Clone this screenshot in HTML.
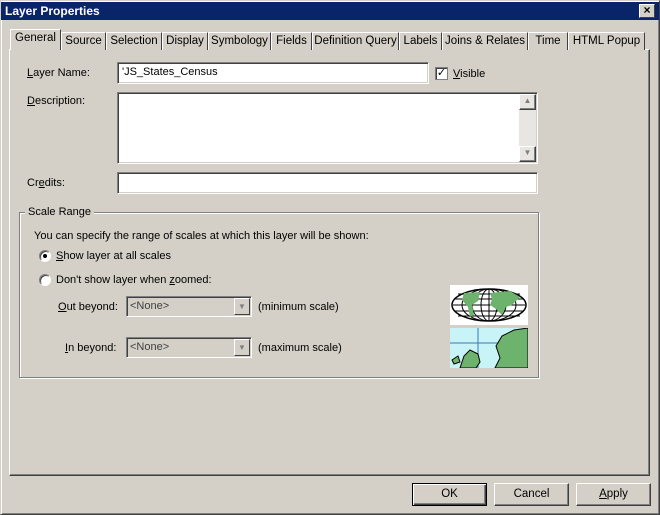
<!DOCTYPE html>
<html><head><style>
*{box-sizing:border-box;margin:0;padding:0}
body{width:660px;height:515px;background:#d4d0c8;font-family:"Liberation Sans",Arial,sans-serif;font-size:11px;color:#000;position:relative;overflow:hidden}
.a{position:absolute}
.win{left:0;top:0;width:660px;height:515px;border:1px solid;border-color:#d4d0c8 #404040 #404040 #d4d0c8;box-shadow:inset 1px 1px 0 #fff,inset -1px -1px 0 #808080}
.title{left:1px;top:2px;width:658px;height:18px;background:#0a246a;color:#fff;font-weight:bold;font-size:12px;line-height:18px;padding-left:4px}
.close{right:5px;top:4px;width:16px;height:14px;background:#d4d0c8;border:1px solid;border-color:#fff #404040 #404040 #fff;color:#000;font-size:12px;line-height:11px;text-align:center;font-weight:bold}
.tab{top:32px;height:18px;border:1px solid;border-color:#fff #404040 transparent #fff;border-bottom:none;text-align:center;line-height:16px;background:#d4d0c8;font-size:11.5px}
.tab.sel{top:29px;height:21px;z-index:2}
.panel{left:9px;top:49px;width:641px;height:427px;border:1px solid;border-color:#fff #404040 #404040 #fff;box-shadow:inset -1px -1px 0 #808080}
.edit{background:#fff;border:1px solid;border-color:#808080 #fff #fff #808080;box-shadow:inset 1px 1px 0 #404040,inset -1px -1px 0 #d4d0c8}
.btn{height:23px;border:1px solid;border-color:#fff #404040 #404040 #fff;box-shadow:inset -1px -1px 0 #808080;text-align:center;line-height:21px;font-size:11.5px}
.grp{left:19px;top:212px;width:520px;height:166px;border:1px solid #808080;box-shadow:1px 1px 0 #fff,inset 1px 1px 0 #fff}
.combo{height:21px;width:126px;background:#d4d0c8;border:1px solid;border-color:#808080 #fff #fff #808080;box-shadow:inset 1px 1px 0 #404040;color:#404040;padding-left:3px;line-height:18px}
.dd{right:1px;top:1px;width:16px;height:17px;border:1px solid;border-color:#fff #404040 #404040 #fff;background:#d4d0c8;color:#808080;font-size:8px;line-height:15px;text-align:center}
.radio{width:12px;height:12px;border-radius:50%;background:#fff;border:1px solid;border-color:#808080 #fff #fff #808080;box-shadow:inset 1px 1px 0 #404040}
</style></head><body>
<div class="a win"></div>
<div class="a title">Layer Properties</div>
<div class="a close">×</div>

<div class="a panel"></div>
<div class="a tab sel" style="left:10px;width:51px">General</div>
<div class="a tab" style="left:61px;width:45px">Source</div>
<div class="a tab" style="left:106px;width:56px">Selection</div>
<div class="a tab" style="left:162px;width:46px">Display</div>
<div class="a tab" style="left:208px;width:63px">Symbology</div>
<div class="a tab" style="left:271px;width:41px">Fields</div>
<div class="a tab" style="left:312px;width:87px">Definition Query</div>
<div class="a tab" style="left:399px;width:43px">Labels</div>
<div class="a tab" style="left:442px;width:86px">Joins &amp; Relates</div>
<div class="a tab" style="left:528px;width:40px">Time</div>
<div class="a tab" style="left:568px;width:77px">HTML Popup</div>

<div class="a" style="left:27px;top:67px"><u>L</u>ayer Name:</div>
<div class="a edit" style="left:117px;top:62px;width:312px;height:22px;padding:3px 4px">'JS_States_Census</div>
<div class="a" style="left:435px;top:67px;width:13px;height:13px;background:#fff;border:1px solid #808080;box-shadow:inset 1px 1px 0 #404040;font-size:11px;line-height:11px;text-align:center">✓</div>
<div class="a" style="left:453px;top:68px"><u>V</u>isible</div>

<div class="a" style="left:27px;top:95px"><u>D</u>escription:</div>
<div class="a edit" style="left:117px;top:92px;width:421px;height:72px"></div>
<div class="a" style="left:519px;top:94px;width:17px;height:68px;background:#e8e6e2"></div>
<div class="a btn" style="left:519px;top:94px;width:17px;height:16px;line-height:12px;font-size:8px;color:#808080">▲</div>
<div class="a btn" style="left:519px;top:146px;width:17px;height:16px;line-height:12px;font-size:8px;color:#808080">▼</div>

<div class="a" style="left:27px;top:177px">Cr<u>e</u>dits:</div>
<div class="a edit" style="left:117px;top:172px;width:421px;height:22px"></div>

<div class="a grp"></div>
<div class="a" style="left:25px;top:206px;background:#d4d0c8;padding:0 3px">Scale Range</div>
<div class="a" style="left:34px;top:230px">You can specify the range of scales at which this layer will be shown:</div>
<div class="a radio" style="left:39px;top:250px"><div class="a" style="left:3px;top:3px;width:4px;height:4px;background:#000;border-radius:50%"></div></div>
<div class="a" style="left:56px;top:250px"><u>S</u>how layer at all scales</div>
<div class="a radio" style="left:39px;top:274px"></div>
<div class="a" style="left:56px;top:274px">Don't show layer when <u>z</u>oomed:</div>
<div class="a" style="left:58px;top:301px"><u>O</u>ut beyond:</div>
<div class="a combo" style="left:126px;top:296px">&lt;None&gt;<div class="a dd">▼</div></div>
<div class="a" style="left:258px;top:301px">(minimum scale)</div>
<div class="a" style="left:65px;top:342px"><u>I</u>n beyond:</div>
<div class="a combo" style="left:126px;top:337px">&lt;None&gt;<div class="a dd">▼</div></div>
<div class="a" style="left:258px;top:342px">(maximum scale)</div>

<svg class="a" style="left:450px;top:285px" width="78" height="40">
<rect width="78" height="40" fill="#fff"/>
<ellipse cx="39" cy="20" rx="37" ry="16" fill="#fff" stroke="#000" stroke-width="1.5"/>
<g stroke="#000" stroke-width="1">
<path d="M4 14H74M3 20H75M4 26H74M8 9H70M8 31H70"/>
<ellipse cx="39" cy="20" rx="8" ry="16" fill="none"/><ellipse cx="39" cy="20" rx="17" ry="16" fill="none"/><ellipse cx="39" cy="20" rx="27" ry="16" fill="none"/><path d="M39 4V36"/></g>
<path d="M14 8L30 7 28 16 22 20 24 30 20 32 18 22 12 15Z M40 8L60 6 70 12 62 20 56 22 52 30 46 24 40 20 42 14Z" fill="#6db36d"/>
</svg>
<svg class="a" style="left:450px;top:328px" width="78" height="40">
<rect width="78" height="40" fill="#c8f4f8"/>
<path d="M0 15H78M28 0V40" stroke="#3a7ab0" stroke-width="1"/>
<path d="M45 40L50 30 46 18 52 8 64 2 78 0V40Z M10 40L14 28 20 22 28 26 30 34 26 40Z M2 32L8 28 10 34 4 36Z" fill="#6db36d" stroke="#000" stroke-width="1"/>
</svg>

<div class="a btn" style="left:412px;top:483px;width:75px;border:1px solid #000;box-shadow:inset 1px 1px 0 #fff,inset -1px -1px 0 #404040,inset -2px -2px 0 #808080">OK</div>
<div class="a btn" style="left:494px;top:483px;width:75px">Cancel</div>
<div class="a btn" style="left:576px;top:483px;width:75px"><u>A</u>pply</div>
</body></html>
